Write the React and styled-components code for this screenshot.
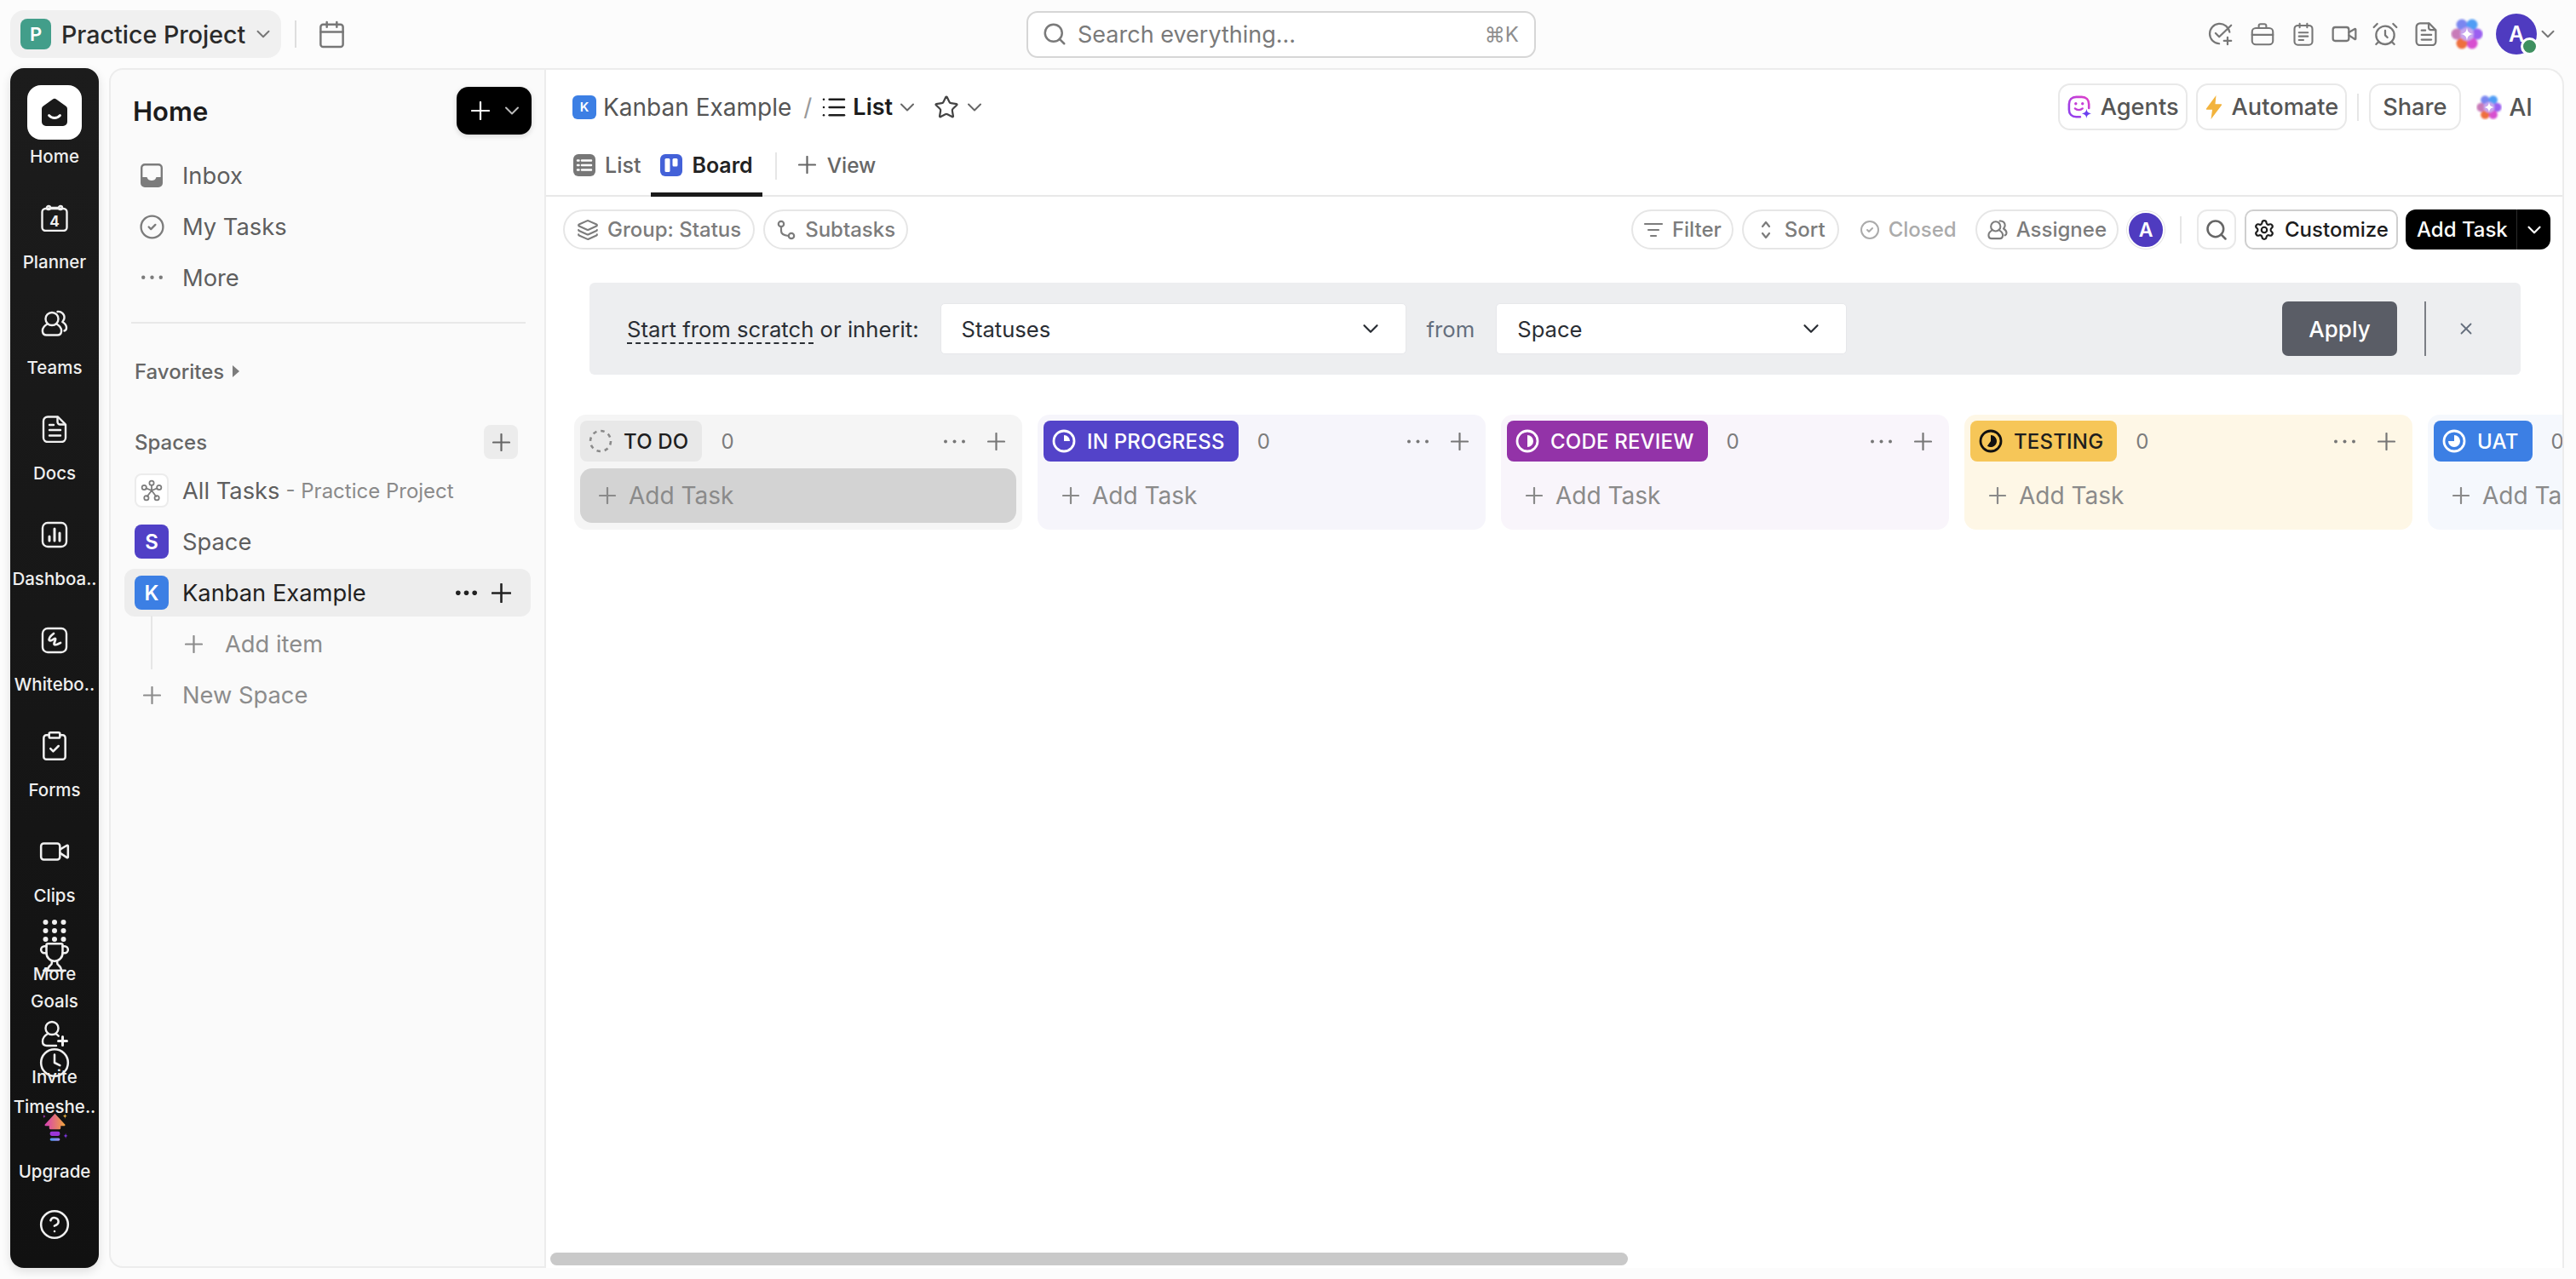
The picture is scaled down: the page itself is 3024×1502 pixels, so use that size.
import React from "react";
import styled, { createGlobalStyle } from "styled-components";
import {
  AlarmClock,
  Calendar,
  ChevronDown,
  CircleCheck,
  CircleHelp,
  ClipboardCheck,
  Clock,
  Layers,
  List,
  ListFilter,
  Search,
  Settings,
  Star,
  Trophy,
  Video,
  X,
} from "lucide-react";

const GlobalStyle = createGlobalStyle`
  * { box-sizing: border-box; }
  html, body { margin: 0; padding: 0; background: #fcfcfc; }
  body {
    font-family: Inter, "DejaVu Sans", "Liberation Sans", sans-serif;
    color: #222;
    overflow: hidden;
  }
`;

const Page = styled.div`
  width: 3024px;
  height: 1502px;
  display: flex;
  flex-direction: column;
`;

/* top bar */
const TopBar = styled.header`
  height: 80px;
  flex-shrink: 0;
  display: grid;
  grid-template-columns: 1193px 598px 1fr;
  align-items: center;
  padding: 0 20px 0 12px;
`;

const TopLeft = styled.div`
  display: flex;
  align-items: center;
`;

const WorkspacePill = styled.div`
  width: 318px;
  height: 56px;
  display: flex;
  align-items: center;
  gap: 12px;
  padding-left: 12px;
  background: #f0f0f0;
  border-radius: 16px;
  color: #2a2a2a;
  font-size: 28.6px;
  font-weight: 500;
  white-space: nowrap;
  svg { color: #777; margin-left: -4px; }
`;

const LetterTile = styled.span`
  width: ${(p) => p.$size || 40}px;
  height: ${(p) => p.$size || 40}px;
  flex-shrink: 0;
  display: flex;
  align-items: center;
  justify-content: center;
  border-radius: ${(p) => p.$radius || 8}px;
  background: ${(p) => p.$bg};
  color: #fff;
  font-size: ${(p) => p.$font || 24}px;
  font-weight: 600;
`;

const TopDivider = styled.span`
  width: 2px;
  height: 32px;
  margin: 0 24px 0 16px;
  background: #dedede;
`;

const SearchBox = styled.div`
  height: 55px;
  display: flex;
  align-items: center;
  gap: 12px;
  padding: 0 18px 0 16px;
  background: #fff;
  border: 2.5px solid #d6d6d6;
  border-radius: 13px;
  color: #7a7a7a;
  font-size: 27px;
  span:last-child {
    margin-left: auto;
    font-size: 24px;
    color: #8e8e8e;
  }
`;

const TopRight = styled.div`
  display: flex;
  align-items: center;
  justify-content: flex-end;
  gap: 20px;
  color: #777;
`;

const TopIcon = styled.span`
  width: 28px;
  height: 28px;
  display: flex;
  align-items: center;
  justify-content: center;
  svg { flex-shrink: 0; }
`;

const BrainSlot = styled.span`
  display: flex;
  margin: 0 -5px;
`;

const AvatarWrap = styled.div`
  position: relative;
  width: 48px;
  height: 48px;
  display: flex;
  align-items: center;
  justify-content: center;
  border-radius: 50%;
  background: #4f3bc0;
  color: #fff;
  font-size: 25px;
  font-weight: 600;
`;

const StatusDot = styled.span`
  position: absolute;
  right: -2px;
  bottom: -1px;
  width: 21px;
  height: 21px;
  border-radius: 50%;
  background: #3f9060;
  border: 3px solid #fff;
`;

const AvatarChevron = styled.span`
  display: flex;
  margin-left: -20px;
  color: #777;
`;

/* page body */
const Body = styled.div`
  flex: 1;
  min-height: 0;
  display: flex;
  padding: 0 14px 13px 12px;
`;

const Rail = styled.nav`
  position: relative;
  width: 104px;
  flex-shrink: 0;
  margin-right: 12px;
  background: linear-gradient(180deg, #1c1c1c, #111);
  border-radius: 16px;
  box-shadow: 0 4px 12px rgba(0, 0, 0, 0.12);
  overflow: hidden;
  color: #f0f0f0;
`;

const RailItem = styled.div`
  height: 124px;
  display: flex;
  flex-direction: column;
  align-items: center;
  justify-content: flex-end;
  gap: 23px;
  padding-bottom: 7px;
`;

const RailIcon = styled.span`
  width: 32px;
  height: 32px;
  display: flex;
  align-items: center;
  justify-content: center;
  svg { flex-shrink: 0; }
`;

const RailLabel = styled.span`
  height: 26px;
  line-height: 26px;
  font-size: 20.5px;
  font-weight: 500;
  color: #efefef;
  white-space: nowrap;
`;

const HomeTile = styled.span`
  width: 64px;
  height: 64px;
  margin-bottom: -16px;
  display: flex;
  align-items: center;
  justify-content: center;
  background: #fff;
  border-radius: 16px;
`;

const RailFooter = styled.div`
  position: absolute;
  left: 0;
  right: 0;
  bottom: 35px;
  display: flex;
  flex-direction: column;
  align-items: center;
  gap: 33px;
`;

const FooterItem = styled.div`
  display: flex;
  flex-direction: column;
  align-items: center;
  gap: 22px;
  &:first-child { margin-bottom: 8px; }
  &:nth-child(2) { margin-bottom: -2px; }
`;

/* left sidebar */
const Sidebar = styled.aside`
  width: 513px;
  flex-shrink: 0;
  padding: 20px 16px 0 16px;
  background: #fafafa;
  border: 2px solid #ececec;
  border-radius: 16px 0 0 16px;
`;

const SideHead = styled.div`
  display: flex;
  align-items: center;
  justify-content: space-between;
  height: 56px;
  padding-left: 10px;
  margin-bottom: 18px;
`;

const SideTitle = styled.h2`
  margin: 0;
  font-size: 31px;
  font-weight: 600;
  color: #1c1c1c;
`;

const CreateButton = styled.button`
  width: 88px;
  height: 56px;
  margin-right: -1px;
  display: flex;
  align-items: center;
  gap: 12px;
  padding: 0 0 0 17px;
  border: 0;
  border-radius: 14px;
  background: #000;
  color: #fff;
  box-shadow: 0 2px 6px rgba(0, 0, 0, 0.15);
`;

const SideRow = styled.div`
  position: relative;
  height: ${(p) => (p.$active ? 56 : 60)}px;
  margin: ${(p) => (p.$active ? "2px 0" : "0")};
  display: flex;
  align-items: center;
  gap: ${(p) => (p.$sub ? 26 : 16)}px;
  padding-left: ${(p) => (p.$sub ? 71 : 12)}px;
  padding-right: 23px;
  border-radius: 12px;
  background: ${(p) => (p.$active ? "#ededed" : "transparent")};
  color: ${(p) => p.$color || "#5e5e5e"};
  font-size: 27.3px;
  svg { flex-shrink: 0; }
  ${(p) =>
    p.$sub &&
    `&::before {
      content: "";
      position: absolute;
      left: 31px;
      top: -3px;
      bottom: 0;
      width: 2px;
      background: #e6e6e6;
    }`}
`;

const RowIcon = styled.span`
  width: 40px;
  height: 40px;
  flex-shrink: 0;
  display: flex;
  align-items: center;
  justify-content: center;
  color: ${(p) => p.$color || "#7c7c7c"};
`;

const OutlineTile = styled(RowIcon)`
  background: #fff;
  border: 2px solid #ececec;
  border-radius: 8px;
`;

const Faint = styled.span`
  margin-left: -9px;
  font-size: 24px;
  color: #8a8a8a;
`;

const RowTools = styled.span`
  margin-left: auto;
  display: flex;
  align-items: center;
  gap: 17px;
  color: #222;
`;

const SideDivider = styled.div`
  height: 2px;
  margin: 22px 6px 36px 8px;
  background: #e8e8e8;
`;

const SectionHead = styled.div`
  height: 40px;
  display: flex;
  align-items: center;
  gap: 10px;
  padding-left: 12px;
  padding-right: 15px;
  margin-bottom: ${(p) => p.$after || 0}px;
  font-size: 24px;
  font-weight: 500;
  color: #666;
`;

const Caret = styled.span`
  width: 0;
  height: 0;
  border-left: 8px solid #7c7c7c;
  border-top: 7px solid transparent;
  border-bottom: 7px solid transparent;
`;

const SquareAdd = styled.span`
  width: 40px;
  height: 40px;
  margin-left: auto;
  display: flex;
  align-items: center;
  justify-content: center;
  background: #ececec;
  border-radius: 8px;
  color: #666;
`;

/* main panel */
const Main = styled.main`
  flex: 1;
  min-width: 0;
  display: flex;
  flex-direction: column;
  background: #fff;
  border: 2px solid #ececec;
  border-left: 0;
  border-bottom: 0;
  border-top-right-radius: 20px;
  overflow: hidden;
`;

const HeadRow = styled.div`
  flex-shrink: 0;
  display: flex;
  align-items: center;
  justify-content: space-between;
  height: 78px;
  padding: 16px 35px 7px 31px;
`;

const Crumbs = styled.div`
  display: flex;
  align-items: center;
  font-size: 28px;
  color: #555;
`;

const CrumbName = styled.span`
  margin-left: 8px;
`;

const Slash = styled.span`
  margin: 0 10px 0 14px;
  color: #999;
`;

const CrumbCurrent = styled.span`
  display: flex;
  align-items: center;
  gap: 6px;
  font-size: 27px;
  font-weight: 600;
  color: #1c1c1c;
`;

const CrumbChevron = styled.span`
  display: flex;
  margin-left: ${(p) => p.$left}px;
  color: #666;
`;

const HeadActions = styled.div`
  display: flex;
  align-items: center;
  gap: 10px;
`;

const HeadButton = styled.span`
  height: 55px;
  display: flex;
  align-items: center;
  gap: 11px;
  padding: 0 8px 0 9px;
  border: 2px solid #e9e9e9;
  border-radius: 14px;
  font-size: 27.2px;
  font-weight: 500;
  color: #555;
`;

const ShareButton = styled(HeadButton)`
  padding: 0 14px;
`;

const AiButton = styled.span`
  display: flex;
  align-items: center;
  gap: 9px;
  margin-left: 8px;
  font-size: 28px;
  font-weight: 500;
  color: #555;
`;

const ActionDivider = styled.span`
  width: 2px;
  height: 32px;
  margin: 0 2px;
  background: #e6e6e6;
`;

const TabRow = styled.div`
  height: 71px;
  flex-shrink: 0;
  display: flex;
  align-items: stretch;
  padding-left: 20px;
  border-bottom: 2px solid #e8e8e8;
`;

const Tab = styled.div`
  position: relative;
  display: flex;
  align-items: center;
  gap: ${(p) => (p.$add ? 13 : 11)}px;
  padding: 0 ${(p) => (p.$active ? 11 : 12)}px 2px;
  font-size: ${(p) => (p.$add ? 24.4 : 25)}px;
  font-weight: ${(p) => (p.$active ? 600 : 500)};
  color: ${(p) => (p.$active ? "#222" : "#666")};
  ${(p) =>
    p.$active &&
    `&::after {
      content: "";
      position: absolute;
      left: 0;
      right: 0;
      bottom: -2px;
      height: 5px;
      background: #1a1a1a;
    }`}
`;

const TabDivider = styled.span`
  align-self: center;
  width: 2px;
  height: 32px;
  margin: 0 13px 0 15px;
  background: #e6e6e6;
`;

const Toolbar = styled.div`
  flex-shrink: 0;
  display: flex;
  align-items: center;
  justify-content: space-between;
  padding: 15px 14px 0 20px;
`;

const PillGroup = styled.div`
  display: flex;
  align-items: center;
  gap: 10px;
`;

const Pill = styled.span`
  height: 47px;
  display: flex;
  align-items: center;
  gap: 10px;
  padding: ${(p) => p.$pad || "0 14px"};
  border: 2px solid ${(p) => (p.$plain ? "transparent" : "#e6e6e6")};
  border-radius: 24px;
  font-size: 24px;
  font-weight: 500;
  color: ${(p) => (p.$plain ? "#ababab" : "#7c7c7c")};
  white-space: nowrap;
`;

const SmallAvatar = styled.span`
  width: 44px;
  height: 44px;
  display: flex;
  align-items: center;
  justify-content: center;
  border-radius: 50%;
  background: #4f3bc0;
  border: 2px solid #fff;
  box-shadow: 0 0 0 1px #e4e4e4;
  color: #fff;
  font-size: 23px;
  font-weight: 600;
`;

const ToolDivider = styled.span`
  width: 2px;
  height: 32px;
  margin: 0 8px;
  background: #e6e6e6;
`;

const SquareTool = styled.span`
  width: 46px;
  height: 47px;
  display: flex;
  align-items: center;
  justify-content: center;
  border: 2px solid #e9e9e9;
  border-radius: 12px;
  color: #666;
`;

const Customize = styled.span`
  width: 180px;
  height: 47px;
  display: flex;
  align-items: center;
  gap: 11px;
  padding-left: 8px;
  border: 2.5px solid #cfcfcf;
  border-radius: 10px;
  font-size: 24px;
  font-weight: 500;
  color: #1c1c1c;
`;

const AddTaskButton = styled.span`
  width: 170px;
  height: 47px;
  margin-left: -1px;
  display: flex;
  align-items: center;
  background: #000;
  border-radius: 12px;
  color: #fff;
  font-size: 24px;
  font-weight: 500;
  span:first-child {
    width: 131px;
    padding-left: 13px;
    line-height: 47px;
    border-right: 1px solid #2b2b2b;
  }
  svg { margin-left: 7px; }
`;

/* inherit banner */
const Banner = styled.section`
  height: 108px;
  flex-shrink: 0;
  margin: 39px 49px 0 51px;
  display: flex;
  align-items: center;
  padding: 0 53px 0 44px;
  background: #edeef0;
  border-radius: 6px;
  font-size: 25.7px;
  color: #2a2e34;
`;

const Dashed = styled.span`
  border-bottom: 2px dashed #2a2e34;
  line-height: 30px;
`;

const Select = styled.div`
  width: ${(p) => p.$width}px;
  height: 60px;
  display: flex;
  align-items: center;
  justify-content: space-between;
  padding: 0 26px 0 24px;
  margin-left: ${(p) => p.$left || 0}px;
  background: #fff;
  border: 1px solid #e6e7ea;
  border-radius: 5px;
  font-size: 25.6px;
  color: #2a2e34;
`;

const FromLabel = styled.span`
  margin-left: 24px;
  color: #656f7d;
`;

const ApplyButton = styled.span`
  width: 135px;
  height: 64px;
  margin-left: auto;
  display: flex;
  align-items: center;
  justify-content: center;
  background: #5a5d66;
  border-radius: 7px;
  color: #fff;
  font-size: 26px;
  font-weight: 500;
`;

const BannerDivider = styled.span`
  width: 2px;
  height: 64px;
  margin: 0 36px 0 32px;
  background: #7b7e85;
`;

const BannerClose = styled.span`
  display: flex;
  color: #656f7d;
`;

/* board */
const Board = styled.div`
  display: flex;
  gap: 18px;
  margin-top: 47px;
  padding-left: 33px;
  flex-shrink: 0;
`;

const Column = styled.section`
  width: 526px;
  height: 135px;
  flex-shrink: 0;
  padding: 7px;
  background: ${(p) => p.$bg};
  border-radius: 14px;
`;

const ColumnHead = styled.div`
  height: 48px;
  display: flex;
  align-items: center;
  color: #777;
`;

const StatusChip = styled.span`
  height: 48px;
  display: flex;
  align-items: center;
  gap: 13px;
  padding: 0 16px 0 10px;
  background: ${(p) => p.$bg};
  color: ${(p) => p.$fg};
  border-radius: 8px;
  font-size: 24px;
  font-weight: 500;
  letter-spacing: 0.2px;
  white-space: nowrap;
`;

const Count = styled.span`
  margin-left: 22px;
  font-size: 24px;
  color: #7c7c7c;
`;

const ColumnTools = styled.span`
  margin-left: auto;
  margin-right: 13px;
  display: flex;
  align-items: center;
  gap: 26px;
  color: #777;
`;

const AddTask = styled.div`
  height: 64px;
  margin-top: 8px;
  display: flex;
  align-items: center;
  gap: 15px;
  padding-left: 22px;
  background: ${(p) => (p.$hover ? "#d3d3d3" : "transparent")};
  border-radius: 14px;
  font-size: 28px;
  color: #8a8a8a;
  white-space: nowrap;
  svg { flex-shrink: 0; }
`;

const ScrollThumb = styled.div`
  width: 1265px;
  height: 15px;
  flex-shrink: 0;
  margin: auto 0 3px 5px;
  background: #c9c9c9;
  border-radius: 8px;
`;

/* drawn icons */
const Line = ({ size = 32, children, width = 2.4, view = 32 }) => (
  <svg width={size} height={size} viewBox={`0 0 ${view} ${view}`} fill="none" stroke="currentColor" strokeWidth={width} strokeLinecap="round" strokeLinejoin="round">
    {children}
  </svg>
);

const PlusIcon = ({ size = 21, width = 2.2 }) => (
  <svg width={size} height={size} viewBox={`0 0 ${size} ${size}`} fill="none" stroke="currentColor" strokeWidth={width} strokeLinecap="round">
    <path d={`M${size / 2} 1V${size - 1}M1 ${size / 2}H${size - 1}`} />
  </svg>
);

const DotsIcon = ({ w = 25, r = 2.2 }) => (
  <svg width={w} height={r * 2 + 1} viewBox={`0 0 ${w} ${r * 2 + 1}`} fill="currentColor">
    <circle cx={r} cy={r + 0.5} r={r} />
    <circle cx={w / 2} cy={r + 0.5} r={r} />
    <circle cx={w - r} cy={r + 0.5} r={r} />
  </svg>
);

const HomeLogo = () => (
  <svg width="34" height="34" viewBox="0 0 34 34">
    <path d="M15 1.500a3.200 3.200 0 0 1 4 0l11.500 8.300A3.600 3.600 0 0 1 32 12.700V28a5 5 0 0 1-5 5H7a5 5 0 0 1-5-5V12.700a3.600 3.600 0 0 1 1.500-2.900Z" fill="#1a1a1a" />
    <path d="M10.500 20.500c3.500 4 9.500 4 13 0" fill="none" stroke="#fff" strokeWidth="2.800" strokeLinecap="round" />
  </svg>
);

const PlannerIcon = () => (
  <Line>
    <rect x="1.500" y="5" width="29" height="26" rx="4" />
    <circle cx="9" cy="4" r="2" />
    <circle cx="23" cy="4" r="2" />
    <path d="M11 4h10" />
    <text x="16" y="26" textAnchor="middle" fontSize="17" fontWeight="700" fontFamily="Inter, sans-serif" fill="currentColor" stroke="none">4</text>
  </Line>
);

const TeamsIcon = ({ size = 32, width = 2.4 }) => (
  <Line size={size} width={width}>
    <circle cx="13" cy="10.500" r="7.500" />
    <path d="M7.500 16.500C4 18.500 1.500 22 2 25.500 2.300 28 4 29.500 6.500 29.500h13c2.500 0 4.200-1.500 4.500-4 .5-3.500-2-7-5.500-9" />
    <path d="M19.500 2c4.500-.7 8.500 3 8 7.500-.2 2-1.500 3.300-2.200 4.500 2.500 1.500 4.700 3.700 4.700 7 0 1.800-.8 3-2.500 3.500" />
  </Line>
);

const DocIcon = ({ size = 32, width = 2.4 }) => (
  <Line size={size} width={width}>
    <path d="M8 1.500h12l9 9V26a5 5 0 0 1-5 5H8a5 5 0 0 1-5-5V6.500a5 5 0 0 1 5-5Z" />
    <path d="M19.500 2v5.500a3 3 0 0 0 3 3H28M10 11h5M10 17h13M10 23.500h13" />
  </Line>
);

const DashboardIcon = () => (
  <Line>
    <rect x="2" y="2" width="28" height="28" rx="6" />
    <path d="M10 23v-5M16 23V9M22 23v-9" strokeWidth="3" />
  </Line>
);

const WhiteboardIcon = () => (
  <Line>
    <rect x="2" y="2" width="28" height="28" rx="6" />
    <path d="M15 8c-4 3-6 6-5 8 2 2 6-3 7-2 1 2-3 6-1 7 2 1 4-1 7-2" strokeWidth="2.800" />
  </Line>
);

const InviteIcon = () => (
  <Line>
    <circle cx="13" cy="9.500" r="7.500" />
    <path d="M8 16c-3.500 2-6 5.500-6 9 0 3 2 5 5 5h11M18 16.500c1 .5 2 1.300 2.800 2.200" />
    <path d="M25.500 19.500v10M20.500 24.500h10" strokeWidth="3" />
  </Line>
);

const DotsGrid = () => (
  <svg width="32" height="32" viewBox="0 0 32 32" fill="currentColor">
    {[6, 16, 26].flatMap((cy) => [5.500, 16, 26.500].map((cx) => <circle key={`${cx}-${cy}`} cx={cx} cy={cy} r="3" />))}
  </svg>
);

const UpgradeIcon = () => (
  <svg width="37" height="37" viewBox="-4 0 44 44">
    <defs>
      <linearGradient id="upArrow" x1="0" x2="1">
        <stop offset="0" stopColor="#d63fb5" />
        <stop offset="1" stopColor="#f0a63c" />
      </linearGradient>
      <linearGradient id="upBar" x1="0" x2="1">
        <stop offset="0" stopColor="#4a9af0" />
        <stop offset="1" stopColor="#a28af0" />
      </linearGradient>
    </defs>
    <path d="M18 1 32 16a1.200 1.200 0 0 1-1 2h-5v3a2 2 0 0 1-2 2H12a2 2 0 0 1-2-2v-3H5a1.200 1.200 0 0 1-1-2Z" fill="url(#upArrow)" />
    <rect x="11" y="26" width="14" height="6" rx="2.500" fill="#9a35d8" />
    <rect x="11" y="35" width="14" height="4" rx="2" fill="url(#upBar)" />
    <path d="M33 28c.4 3 1 3.600 3 4-2 .4-2.600 1-3 4-.4-3-1-3.600-3-4 2-.4 2.600-1 3-4Z" fill="#7a35d8" />
    <path d="M3 2c.3 2 .7 2.400 2 2.700-1.300.3-1.700.7-2 2.700-.3-2-.7-2.400-2-2.700 1.300-.3 1.700-.7 2-2.700Z" fill="#c33fd0" />
    <path d="M32 1c.3 2.500.8 3 3 3.500-2.200.5-2.700 1-3 3.500-.3-2.500-.8-3-3-3.500 2.200-.5 2.700-1 3-3.500Z" fill="#f0b43c" />
  </svg>
);

const InboxIcon = () => (
  <svg width="26" height="28" viewBox="0 0 26 28">
    <path d="M5 1.200h16A3.800 3.800 0 0 1 24.800 5v18a3.800 3.800 0 0 1-3.800 3.800H5A3.800 3.800 0 0 1 1.200 23V5A3.800 3.800 0 0 1 5 1.200Z" fill="none" stroke="#7c7c7c" strokeWidth="2.400" />
    <path d="M1 16h6.500c1 3 3 4 5.500 4s4.500-1 5.500-4H25v7a4 4 0 0 1-4 4H5a4 4 0 0 1-4-4Z" fill="#7c7c7c" />
  </svg>
);

const NodesIcon = () => (
  <Line size={28} width={2}>
    <circle cx="16" cy="6" r="3" />
    <circle cx="6" cy="12" r="3" />
    <circle cx="26" cy="12" r="3" />
    <circle cx="9" cy="26" r="3" />
    <circle cx="23" cy="26" r="3" />
    <path d="M16 9v7l-7.500-3M16 16l7.500-3M16 16l-6 8M16 16l6 8" />
  </Line>
);

const SubtaskIcon = () => (
  <Line size={24} width={2.200} view={24}>
    <circle cx="6" cy="5" r="3.200" />
    <circle cx="18" cy="19" r="3.200" />
    <path d="M6 8.500V13c0 3 2.500 5.500 8.500 6" />
  </Line>
);

const SortIcon = () => (
  <Line size={24} width={2.200} view={24}>
    <path d="m8 8 4-5 4 5M8 16l4 5 4-5" />
  </Line>
);

const ListTile = () => (
  <svg width="26" height="26" viewBox="0 0 26 26">
    <rect width="26" height="26" rx="6" fill="#777" />
    <path d="M5 7.500h1.500M10 7.500h11M5 13h1.500M10 13h11M5 18.500h1.500M10 18.500h11" stroke="#fff" strokeWidth="2.500" strokeLinecap="round" />
  </svg>
);

const BoardTile = () => (
  <svg width="26" height="26" viewBox="0 0 26 26">
    <rect width="26" height="26" rx="6" fill="#4361d8" />
    <rect x="5.500" y="5" width="6" height="16" rx="1.500" fill="#fff" />
    <rect x="14.500" y="5" width="6" height="9.500" rx="1.500" fill="#fff" />
  </svg>
);

const AgentsIcon = () => (
  <svg width="28" height="28" viewBox="0 0 30 30" fill="none">
    <defs>
      <linearGradient id="agentG" x1="1" x2="0" y1="0" y2="1">
        <stop offset="0" stopColor="#e040c8" />
        <stop offset="1" stopColor="#8b3ff0" />
      </linearGradient>
    </defs>
    <path d="M16 27H11C5.500 27 2 23.500 2 18v-7C2 5.500 5.500 2 11 2h7c5.500 0 9 3.500 9 9v5" stroke="url(#agentG)" strokeWidth="2.800" strokeLinecap="round" />
    <circle cx="10.500" cy="10.500" r="1.800" fill="#c43fd8" />
    <circle cx="19" cy="10.500" r="1.800" fill="#c43fd8" />
    <path d="M9.500 16.500c2.500 2.500 7 2.500 9.500 0" stroke="#c43fd8" strokeWidth="2.500" strokeLinecap="round" />
    <path d="M24 17c.7 4 1.500 5 6 6-4.500 1-5.300 2-6 6-.7-4-1.500-5-6-6 4.500-1 5.300-2 6-6Z" fill="#6b3ff0" />
  </svg>
);

const BoltIcon = () => (
  <svg width="20" height="30" viewBox="0 0 20 30">
    <path d="M12.500 1 1 16.500c-.4.6 0 1.300.7 1.300H8L6.500 29 19 12.500c.4-.6 0-1.300-.7-1.300H11.500Z" fill="#f2b33d" />
  </svg>
);

const petals = [
  { cx: 13, cy: 8, fill: "#7a86f0" },
  { cx: 25, cy: 8, fill: "#4f9df5" },
  { cx: 31, cy: 19, fill: "#9a5ff0" },
  { cx: 25, cy: 30, fill: "#d84fd0" },
  { cx: 13, cy: 30, fill: "#ee6f3c" },
  { cx: 7, cy: 19, fill: "#c87ab8" },
];

const BrainIcon = ({ id, size = 38 }) => (
  <svg width={size} height={size} viewBox="0 0 38 38">
    <defs>
      <filter id={id} x="-10%" y="-10%" width="120%" height="120%">
        <feGaussianBlur stdDeviation="1.100" />
      </filter>
    </defs>
    <g filter={`url(#${id})`}>
      {petals.map((p) => <circle key={p.fill} cx={p.cx} cy={p.cy} r="6.500" fill={p.fill} />)}
      <circle cx="19" cy="19" r="8" fill="#c9a6ef" />
    </g>
    <path d="M19 11.500c.9 5.200 2.300 6.600 7.500 7.500-5.200.9-6.600 2.300-7.500 7.500-.9-5.200-2.300-6.600-7.500-7.500 5.200-.9 6.600-2.300 7.500-7.500Z" fill="#fff" />
  </svg>
);

const CheckPlusIcon = () => (
  <Line size={30} width={2.400}>
    <path d="M27 13.500A12.500 12.500 0 1 0 14 28" />
    <path d="m9.500 15 4.500 4.500L29 5M24.500 20v9M20 24.500h9" />
  </Line>
);

const BagIcon = () => (
  <Line size={28} width={2.400}>
    <rect x="2" y="8" width="28" height="22" rx="5" />
    <path d="M11 8V5a2.500 2.500 0 0 1 2.500-2.500h5A2.500 2.500 0 0 1 21 5v3M2 17h28" />
  </Line>
);

const NotepadIcon = () => (
  <Line size={28} width={2.400}>
    <rect x="4" y="4.500" width="24" height="26" rx="4.500" />
    <path d="M11 2v5M21 2v5M10 14h12M10 19h12M10 24h6" />
  </Line>
);

const StatusIcon = ({ pct, color, dashed }) => {
  const angle = (pct / 100) * 2 * Math.PI;
  const x = 14 + 7 * Math.sin(angle);
  const y = 14 - 7 * Math.cos(angle);
  return (
    <svg width="28" height="28" viewBox="0 0 28 28">
      <circle cx="14" cy="14" r="12" fill="none" stroke={color} strokeWidth={dashed ? 2.600 : 2.800} strokeDasharray={dashed ? "4.500 4.900" : undefined} />
      {!dashed && <path d={`M14 14V7A7 7 0 ${pct > 50 ? 1 : 0} 1 ${x} ${y}Z`} fill={color} />}
    </svg>
  );
};

const columns = [
  { name: "TO DO", bg: "#f5f5f5", chip: "#e8e8e8", fg: "#1e1e1e", ring: "#8a8a8a", dashed: true, pct: 0, hover: true },
  { name: "IN PROGRESS", bg: "#f6f5fb", chip: "#5343c9", fg: "#fff", ring: "#fff", pct: 25 },
  { name: "CODE REVIEW", bg: "#f9f5fb", chip: "#9333a8", fg: "#fff", ring: "#fff", pct: 50 },
  { name: "TESTING", bg: "#fef7e6", chip: "#f6c658", fg: "#1e1e1e", ring: "#111", pct: 60 },
  { name: "UAT", bg: "#f5f8fd", chip: "#3c7fe4", fg: "#fff", ring: "#fff", pct: 75 },
];

const railItems = [
  { label: "Planner", icon: <PlannerIcon /> },
  { label: "Teams", icon: <TeamsIcon /> },
  { label: "Docs", icon: <DocIcon /> },
  { label: "Dashboa..", icon: <DashboardIcon /> },
  { label: "Whitebo..", icon: <WhiteboardIcon /> },
  { label: "Forms", icon: <ClipboardCheck size={38} strokeWidth={1.600} /> },
  { label: "Clips", icon: <Video size={38} strokeWidth={1.600} /> },
  { label: "Goals", icon: <Trophy size={38} strokeWidth={1.600} /> },
  { label: "Timeshe..", icon: <Clock size={38} strokeWidth={1.600} /> },
];

const App = () => {
  return (
    <Page>
      <GlobalStyle />
      <TopBar>
        <TopLeft>
          <WorkspacePill>
            <LetterTile $size={36} $bg="#429e8a" $font={22}>P</LetterTile>
            Practice Project
            <ChevronDown size={26} strokeWidth={1.800} />
          </WorkspacePill>
          <TopDivider />
          <Calendar size={35} color="#777" strokeWidth={1.700} />
        </TopLeft>
        <SearchBox>
          <Search size={30} strokeWidth={2} />
          <span>Search everything...</span>
          <span>⌘K</span>
        </SearchBox>
        <TopRight>
          <CheckPlusIcon />
          <BagIcon />
          <NotepadIcon />
          <TopIcon><Video size={32} strokeWidth={1.700} /></TopIcon>
          <TopIcon><AlarmClock size={32} strokeWidth={1.700} /></TopIcon>
          <TopIcon><DocIcon size={28} width={2.600} /></TopIcon>
          <BrainSlot><BrainIcon id="topBrain" /></BrainSlot>
          <AvatarWrap>
            A
            <StatusDot />
          </AvatarWrap>
          <AvatarChevron><ChevronDown size={26} strokeWidth={1.800} /></AvatarChevron>
        </TopRight>
      </TopBar>

      <Body>
        <Rail>
          <RailItem>
            <HomeTile><HomeLogo /></HomeTile>
            <RailLabel>Home</RailLabel>
          </RailItem>
          {railItems.map((item) => (
            <RailItem key={item.label}>
              <RailIcon>{item.icon}</RailIcon>
              <RailLabel>{item.label}</RailLabel>
            </RailItem>
          ))}
          <RailFooter>
            <FooterItem>
              <RailIcon><DotsGrid /></RailIcon>
              <RailLabel>More</RailLabel>
            </FooterItem>
            <FooterItem>
              <RailIcon><InviteIcon /></RailIcon>
              <RailLabel>Invite</RailLabel>
            </FooterItem>
            <FooterItem>
              <RailIcon><UpgradeIcon /></RailIcon>
              <RailLabel>Upgrade</RailLabel>
            </FooterItem>
            <RailIcon><CircleHelp size={38} strokeWidth={1.600} /></RailIcon>
          </RailFooter>
        </Rail>

        <Sidebar>
          <SideHead>
            <SideTitle>Home</SideTitle>
            <CreateButton>
              <PlusIcon size={22} />
              <ChevronDown size={28} strokeWidth={1.700} color="#bbb" />
            </CreateButton>
          </SideHead>
          <SideRow>
            <RowIcon><InboxIcon /></RowIcon>
            Inbox
          </SideRow>
          <SideRow>
            <RowIcon><CircleCheck size={31} strokeWidth={1.800} /></RowIcon>
            My Tasks
          </SideRow>
          <SideRow>
            <RowIcon><DotsIcon r={2.200} /></RowIcon>
            More
          </SideRow>
          <SideDivider />
          <SectionHead $after={43}>
            Favorites
            <Caret />
          </SectionHead>
          <SectionHead $after={7}>
            Spaces
            <SquareAdd><PlusIcon /></SquareAdd>
          </SectionHead>
          <SideRow>
            <OutlineTile><NodesIcon /></OutlineTile>
            <span>All Tasks</span>
            <Faint>- Practice Project</Faint>
          </SideRow>
          <SideRow>
            <LetterTile $bg="#5040c6">S</LetterTile>
            Space
          </SideRow>
          <SideRow $active $color="#222">
            <LetterTile $bg="#3c7fe4">K</LetterTile>
            Kanban Example
            <RowTools>
              <DotsIcon r={2.800} />
              <PlusIcon size={23} width={2.600} />
            </RowTools>
          </SideRow>
          <SideRow $sub $color="#8c8c8c">
            <PlusIcon />
            Add item
          </SideRow>
          <SideRow $color="#8c8c8c">
            <RowIcon $color="#8c8c8c"><PlusIcon /></RowIcon>
            New Space
          </SideRow>
        </Sidebar>

        <Main>
          <HeadRow>
            <Crumbs>
              <LetterTile $size={28} $radius={6} $bg="#3c7fe4" $font={15}>K</LetterTile>
              <CrumbName>Kanban Example</CrumbName>
              <Slash>/</Slash>
              <CrumbCurrent>
                <List size={32} strokeWidth={1.900} />
                List
              </CrumbCurrent>
              <CrumbChevron $left={3}><ChevronDown size={28} strokeWidth={1.700} /></CrumbChevron>
              <CrumbChevron $left={17}><Star size={30} strokeWidth={1.800} color="#444" /></CrumbChevron>
              <CrumbChevron $left={4}><ChevronDown size={28} strokeWidth={1.700} /></CrumbChevron>
            </Crumbs>
            <HeadActions>
              <HeadButton><AgentsIcon />Agents</HeadButton>
              <HeadButton><BoltIcon />Automate</HeadButton>
              <ActionDivider />
              <ShareButton>Share</ShareButton>
              <AiButton><BrainIcon id="aiBrain" size={30} />AI</AiButton>
            </HeadActions>
          </HeadRow>

          <TabRow>
            <Tab><ListTile />List</Tab>
            <Tab $active><BoardTile />Board</Tab>
            <TabDivider />
            <Tab $add>
              <PlusIcon />
              View
            </Tab>
          </TabRow>

          <Toolbar>
            <PillGroup>
              <Pill><Layers size={26} strokeWidth={2} />Group: Status</Pill>
              <Pill $pad="0 13px"><SubtaskIcon />Subtasks</Pill>
            </PillGroup>
            <PillGroup>
              <Pill $pad="0 12px"><ListFilter size={24} strokeWidth={2.200} />Filter</Pill>
              <Pill><SortIcon />Sort</Pill>
              <Pill $plain $pad="0 10px 0 12px"><CircleCheck size={24} strokeWidth={2} />Closed</Pill>
              <Pill $pad="0 12px"><TeamsIcon size={24} width={2.800} />Assignee</Pill>
              <SmallAvatar>A</SmallAvatar>
              <ToolDivider />
              <SquareTool><Search size={28} strokeWidth={2.200} /></SquareTool>
              <Customize><Settings size={26} strokeWidth={2} />Customize</Customize>
              <AddTaskButton>
                <span>Add Task</span>
                <ChevronDown size={26} strokeWidth={2} />
              </AddTaskButton>
            </PillGroup>
          </Toolbar>

          <Banner>
            <span>
              <Dashed>Start from scratch</Dashed> or inherit:
            </span>
            <Select $width={547} $left={25}>
              Statuses
              <ChevronDown size={30} strokeWidth={1.800} />
            </Select>
            <FromLabel>from</FromLabel>
            <Select $width={412} $left={25}>
              Space
              <ChevronDown size={30} strokeWidth={1.800} />
            </Select>
            <ApplyButton>Apply</ApplyButton>
            <BannerDivider />
            <BannerClose><X size={22} strokeWidth={2} /></BannerClose>
          </Banner>

          <Board>
            {columns.map((col) => (
              <Column key={col.name} $bg={col.bg}>
                <ColumnHead>
                  <StatusChip $bg={col.chip} $fg={col.fg}>
                    <StatusIcon pct={col.pct} color={col.ring} dashed={col.dashed} />
                    {col.name}
                  </StatusChip>
                  <Count>0</Count>
                  <ColumnTools>
                    <DotsIcon r={2} />
                    <PlusIcon />
                  </ColumnTools>
                </ColumnHead>
                <AddTask $hover={col.hover}>
                  <PlusIcon size={20} />
                  Add Task
                </AddTask>
              </Column>
            ))}
          </Board>

          <ScrollThumb />
        </Main>
      </Body>
    </Page>
  );
};

export default App;
